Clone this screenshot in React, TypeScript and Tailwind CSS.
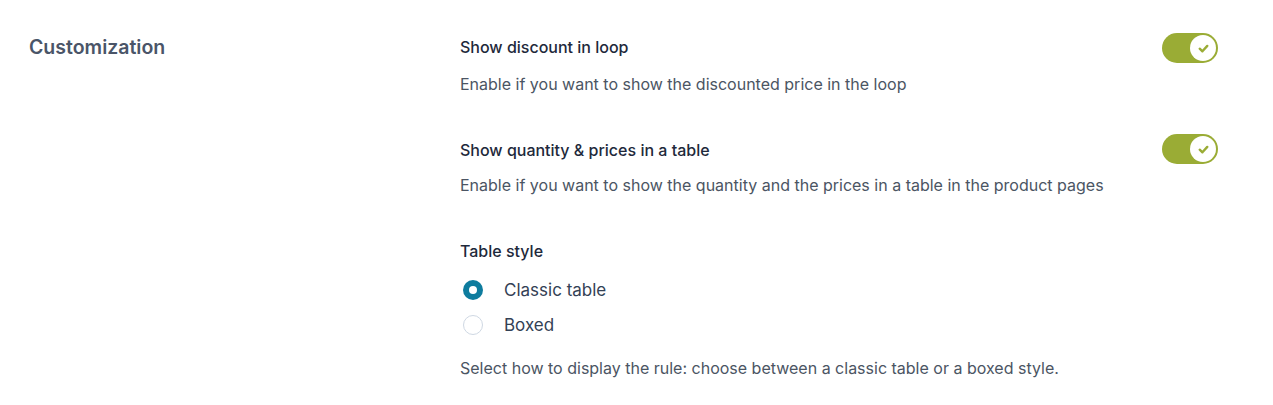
import React, { useState } from "react";

function Toggle({ on, onChange }: { on: boolean; onChange: () => void }) {
  return (
    <button
      type="button"
      onClick={onChange}
      className={`relative flex h-[30px] w-[56px] shrink-0 items-center rounded-full px-[2px] ${
        on ? "justify-end bg-[#9aac35]" : "justify-start bg-[#cbd5e1]"
      }`}
    >
      <span className="flex h-[26px] w-[26px] items-center justify-center rounded-full bg-white">
        {on && (
          <svg width="13" height="13" viewBox="0 0 12 12" fill="none">
            <path
              d="M2.5 6.2 L5 8.6 L9.5 3.6"
              stroke="#9aac35"
              strokeWidth="2.2"
              strokeLinecap="round"
              strokeLinejoin="round"
            />
          </svg>
        )}
      </span>
    </button>
  );
}

function Radio({ checked, label, onClick }: { checked: boolean; label: string; onClick: () => void }) {
  return (
    <label className="flex cursor-pointer items-center gap-[21px]" onClick={onClick}>
      {checked ? (
        <span className="flex h-[20px] w-[20px] items-center justify-center rounded-full bg-[#0e7c9e]">
          <span className="h-[8px] w-[8px] rounded-full bg-white" />
        </span>
      ) : (
        <span className="h-[20px] w-[20px] rounded-full border border-[#cfd8e3] bg-white" />
      )}
      <span className="text-[17px] leading-[20px] text-[#334155]">{label}</span>
    </label>
  );
}

export default function App() {
  const [loop, setLoop] = useState(true);
  const [table, setTable] = useState(true);
  const [style, setStyle] = useState("classic");

  return (
    <div
      className="flex min-h-[405px] bg-white pl-[29px] pr-[55px] pt-[33px]"
      style={{ fontFamily: "Inter, 'Noto Sans', sans-serif" }}
    >
      <div className="w-[431px] shrink-0">
        <h2 className="text-[19.5px] font-semibold leading-[28px] text-[#4a5568]">Customization</h2>
      </div>
      <div className="flex flex-1 flex-col">
        {/* Show discount in loop */}
        <div className="flex items-start justify-between">
          <div>
            <div className="pt-[2px] text-[16px] font-medium leading-[24px] text-[#1e293b]">Show discount in loop</div>
            <p className="mt-[13px] text-[16px] leading-[24px] text-[#4b5563]">
              Enable if you want to show the discounted price in the loop
            </p>
          </div>
          <Toggle on={loop} onChange={() => setLoop(!loop)} />
        </div>

        {/* Show quantity & prices */}
        <div className="mt-[38px] flex items-start justify-between">
          <div>
            <div className="pt-[4px] text-[16px] font-medium leading-[24px] text-[#1e293b]">
              Show quantity &amp; prices in a table
            </div>
            <p className="mt-[11px] text-[16px] leading-[24px] text-[#4b5563]">
              Enable if you want to show the quantity and the prices in a table in the product pages
            </p>
          </div>
          <Toggle on={table} onChange={() => setTable(!table)} />
        </div>

        {/* Table style */}
        <div className="mt-[42px] text-[16px] font-medium leading-[24px] text-[#1e293b]">Table style</div>
        <div className="mt-[17px] flex flex-col gap-[15px] pl-[3px]">
          <Radio checked={style === "classic"} label="Classic table" onClick={() => setStyle("classic")} />
          <Radio checked={style === "boxed"} label="Boxed" onClick={() => setStyle("boxed")} />
        </div>
        <p className="mt-[21px] text-[16px] leading-[24px] text-[#4b5563]">
          Select how to display the rule: choose between a classic table or a boxed style.
        </p>
      </div>
    </div>
  );
}
